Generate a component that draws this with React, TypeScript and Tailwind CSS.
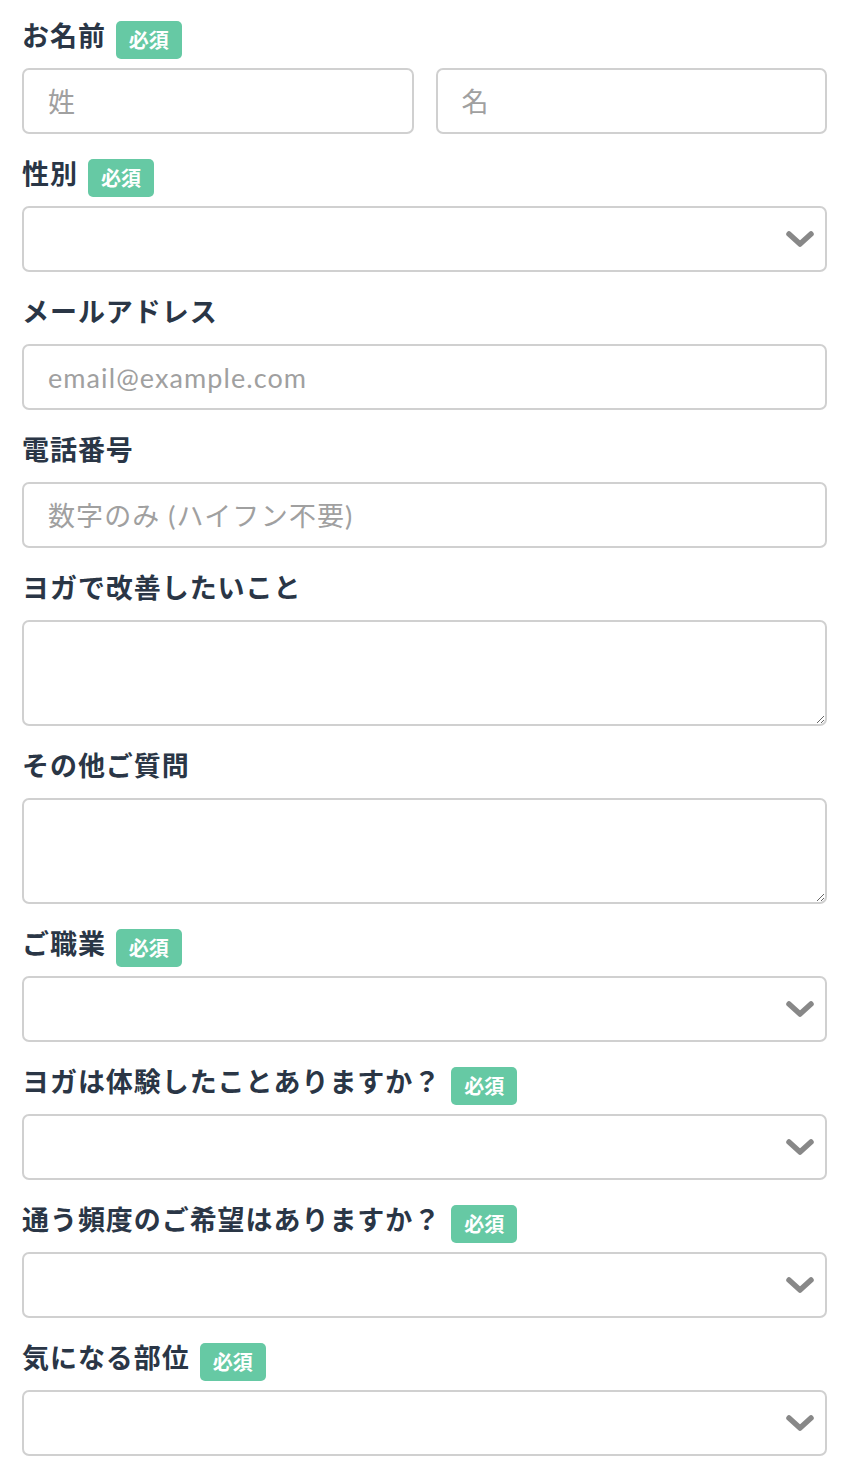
import React from 'react'

const font = { fontFamily: 'Lato, "Noto Sans CJK JP", sans-serif' }

function Badge() {
  return (
    <span className="ml-[10px] inline-flex h-[38px] w-[66px] items-center justify-center rounded-[5px] bg-[#66c9a4] text-[20px] font-bold text-white">
      必須
    </span>
  )
}

function Label({ text, required }: { text: string; required?: boolean }) {
  return (
    <div className="mb-[9px] flex h-[38px] items-center">
      <span className="mb-[7px] text-[27px] font-bold tracking-[0.035em] text-[#2a3646]">{text}</span>
      {required && <Badge />}
    </div>
  )
}

const inputCls =
  'h-[66px] w-full rounded-[7px] border-2 border-[#d0d0d0] bg-white px-[24px] text-[27px] tracking-[0.04em] text-[#333] outline-none placeholder:text-[#a0a0a0]'

function Chevron() {
  return (
    <svg
      className="pointer-events-none absolute right-[12px] top-1/2 -translate-y-1/2"
      width="30"
      height="20"
      viewBox="0 0 30 20"
      fill="none"
    >
      <path d="M4 5 L15 15 L26 5" stroke="#888888" strokeWidth="5.5" strokeLinecap="round" strokeLinejoin="round" />
    </svg>
  )
}

function SelectField({ label }: { label: string }) {
  return (
    <div className="mt-[25px]">
      <Label text={label} required />
      <div className="relative">
        <select className={`${inputCls} appearance-none`} defaultValue="">
          <option value=""></option>
        </select>
        <Chevron />
      </div>
    </div>
  )
}

function TextField({ label, placeholder }: { label: string; placeholder: string }) {
  return (
    <div className="mt-[25px]">
      <Label text={label} />
      <input className={inputCls} placeholder={placeholder} />
    </div>
  )
}

function AreaField({ label }: { label: string }) {
  return (
    <div className="mt-[25px]">
      <Label text={label} />
      <textarea className="block h-[106px] w-full resize-y rounded-[7px] border-2 border-[#d0d0d0] bg-white px-[24px] py-[14px] text-[27px] outline-none" />
    </div>
  )
}

export default function App() {
  return (
    <div className="min-h-screen bg-white pl-[22px] pr-[21px] pt-[21px]" style={font}>
      <div>
        <Label text="お名前" required />
        <div className="flex gap-[22px]">
          <input className={inputCls} placeholder="姓" />
          <input className={inputCls} placeholder="名" />
        </div>
      </div>
      <SelectField label="性別" />
      <TextField label="メールアドレス" placeholder="email@example.com" />
      <TextField label="電話番号" placeholder="数字のみ (ハイフン不要)" />
      <AreaField label="ヨガで改善したいこと" />
      <AreaField label="その他ご質問" />
      <SelectField label="ご職業" />
      <SelectField label="ヨガは体験したことありますか？" />
      <SelectField label="通う頻度のご希望はありますか？" />
      <SelectField label="気になる部位" />
    </div>
  )
}
